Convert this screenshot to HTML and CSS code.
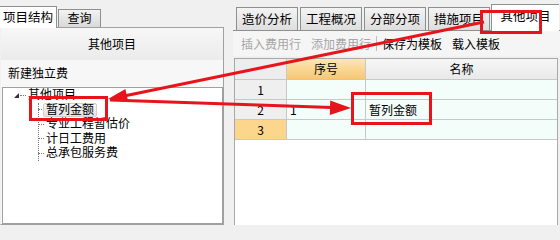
FILE: index.html
```html
<!DOCTYPE html>
<html>
<head>
<meta charset="utf-8">
<link rel="stylesheet" href="styles.css">
</head>
<body>
<div class="app">
  <div class="left">
    <div class="ltabs">
      <div class="ltab active">项目结构</div>
      <div class="ltab">查询</div>
    </div>
    <div class="lpanel">
      <div class="lhead">其他项目</div>
      <div class="lnew">新建独立费</div>
      <div class="tree">
        <div class="node root"><span class="exp"></span><span class="hdots"></span><span class="label">其他项目</span></div>
        <div class="children">
          <div class="node child"><span class="hdots"></span><span class="label sel">暂列金额</span></div>
          <div class="node child"><span class="hdots"></span><span class="label">专业工程暂估价</span></div>
          <div class="node child"><span class="hdots"></span><span class="label">计日工费用</span></div>
          <div class="node child last"><span class="hdots"></span><span class="label">总承包服务费</span></div>
        </div>
      </div>
    </div>
  </div>
  <div class="right">
    <div class="rtabs">
      <div class="rtab">造价分析</div>
      <div class="rtab">工程概况</div>
      <div class="rtab">分部分项</div>
      <div class="rtab">措施项目</div>
      <div class="rtab active">其他项目</div>
    </div>
    <div class="toolbar">
      <span class="tb disabled">插入费用行</span>
      <span class="tb disabled">添加费用行</span>
      <span class="sep"></span>
      <span class="tb">保存为模板</span>
      <span class="tb">载入模板</span>
    </div>
    <div class="grid">
      <div class="c corner"></div>
      <div class="c hseq">序号</div>
      <div class="c hname">名称</div>

      <div class="c rh">1</div>
      <div class="c cell"></div>
      <div class="c cell"></div>

      <div class="c rh">2</div>
      <div class="c cell">1</div>
      <div class="c cell">暂列金额</div>

      <div class="c rh cur">3</div>
      <div class="c cell"></div>
      <div class="c cell"></div>
    </div>
  </div>
</div>
<svg class="annot" width="560" height="225" viewBox="0 0 560 225">
  <g fill="none" stroke="#e8141c" stroke-width="3">
    <rect x="481.5" y="11.5" width="59" height="21"/>
    <rect x="30.5" y="97.5" width="76" height="22"/>
    <rect x="352.5" y="93.5" width="78" height="30"/>
    <line x1="484" y1="22" x2="124" y2="96"/>
    <line x1="110" y1="100" x2="332" y2="107.5"/>
  </g>
  <g fill="#e8141c">
    <polygon points="108,99 125.4,89 128.2,101.8"/>
    <polygon points="351,108 330.2,100.4 329.8,115"/>
  </g>
</svg>
</body>
</html>
```

FILE: styles.css
```css
* { box-sizing: border-box; }
html, body { margin: 0; padding: 0; }
body {
  width: 560px;
  height: 225px;
  overflow: hidden;
  background: #f0f0f0;
  font-family: "Noto Sans CJK SC", "Noto Sans", sans-serif;
  font-size: 12px;
  color: #000;
  position: relative;
}
.app {
  display: flex;
  height: 225px;
}
.left {
  width: 224px;
  display: flex;
  flex-direction: column;
}
.ltabs {
  height: 27px;
  display: flex;
  align-items: flex-end;
}
.ltab {
  height: 18px;
  line-height: 16px;
  padding: 0 2px;
  width: 43px;
  border: 1px solid #8e8f8f;
  border-bottom: none;
  background: linear-gradient(#f2f2f2, #d9d9d9);
  font-size: 12px;
  text-align: center;
  white-space: nowrap;
  margin-left: 1px;
}
.ltab.active {
  width: 57px;
  height: 22px;
  line-height: 20px;
  font-size: 12.5px;
  background: #fff;
  margin-left: 0;
  margin-bottom: -1px;
  position: relative;
  z-index: 1;
  border-left: none;
}
.lpanel {
  flex: 1;
  border: 1px solid #a0a0a0;
  border-left-color: #f0f0f0;
  background: #f7f7f7;
  display: flex;
  flex-direction: column;
}
.lhead {
  height: 32px;
  line-height: 32px;
  text-align: center;
  background: linear-gradient(#f7f7f7, #ebebeb);
}
.lnew {
  height: 27px;
  line-height: 25px;
  padding-left: 7px;
}
.tree {
  flex: 1;
  background: #fff;
  border: 1px solid #a0a0a0;
  margin-left: 1px;
  position: relative;
  font-family: "Liberation Sans", "Noto Sans CJK SC", sans-serif;
}
.node {
  height: 14.5px;
  line-height: 14.5px;
  display: flex;
  align-items: center;
  white-space: nowrap;
}
.root { padding-left: 11px; }
.exp {
  width: 0;
  height: 0;
  border-left: 5px solid transparent;
  border-bottom: 5px solid #333;
  margin-right: 1px;
}
.hdots {
  width: 6px;
  border-top: 1px dotted #777;
  margin-right: 1px;
}
.children {
  position: relative;
  padding-left: 35px;
}
.children::before {
  content: "";
  position: absolute;
  left: 35px;
  top: 0;
  height: 58px;
  border-left: 1px dotted #777;
}
.label {
  padding: 0 1px;
}
.label.sel {
  background: linear-gradient(#f4f4f4, #e4e4e4);
  border: 1px solid #d0d0d0;
  border-radius: 2px;
  line-height: 12px;
  padding: 0 2px;
  margin-left: -2px;
}
.right {
  flex: 1;
  margin-left: 9px;
  display: flex;
  flex-direction: column;
}
.rtabs {
  height: 31px;
  display: flex;
  align-items: flex-end;
  padding-left: 3px;
  border-bottom: 1px solid #8e8f8f;
}
.rtab {
  width: 62px;
  height: 23px;
  line-height: 22px;
  font-size: 12.5px;
  text-align: center;
  white-space: nowrap;
  border: 1px solid #8e8f8f;
  border-bottom: none;
  background: linear-gradient(#f3f3f3, #dedede);
  margin-right: 2px;
}
.rtab.active {
  width: 68px;
  height: 27px;
  line-height: 22px;
  background: #fff;
  margin-right: 0;
  margin-left: -1px;
  margin-bottom: -1px;
  border-right: none;
}
.toolbar {
  height: 25px;
  display: flex;
  align-items: center;
  padding-left: 8px;
  background: #f5f5f5;
}
.tb {
  margin-right: 10px;
  white-space: nowrap;
}
.tb.disabled { color: #a6a6a6; }
.sep {
  width: 1px;
  height: 15px;
  background: #c0c0c0;
  margin: 0 5px 0 -5px;
}
.grid {
  flex: 1;
  margin: 2px 2px 0 1px;
  background: #fff;
  border: 1px solid #a8a8a8;
  border-bottom: none;
  display: grid;
  grid-template-columns: 52px 79px 1fr;
  grid-template-rows: 21px 20px 20px 20px;
  align-content: start;
}
.c {
  border-right: 1px solid #c8c8c8;
  border-bottom: 1px solid #c8c8c8;
  line-height: 19px;
  white-space: nowrap;
}
.corner { background: #ededed; }
.hseq {
  background: linear-gradient(#fde6b8, #f7c870);
  text-align: center;
  line-height: 20px;
}
.hname {
  background: linear-gradient(#f6f6f6, #e9e9e9);
  text-align: center;
  line-height: 20px;
  border-right: none;
}
.rh {
  background: #efefef;
  text-align: center;
}
.rh.cur { background: #fcd68d; }
.cell {
  background: #f3fdfa;
  padding-left: 3px;
}
.cell:nth-child(3n) { border-right: none; }
.annot {
  position: absolute;
  left: 0;
  top: 0;
  pointer-events: none;
}
```
